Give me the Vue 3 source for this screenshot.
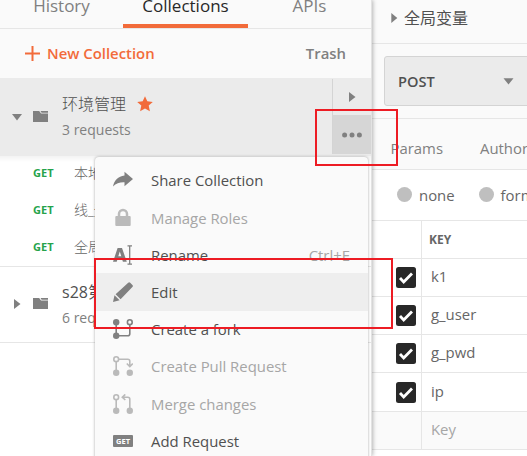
<script setup>
const tabs = ['History', 'Collections', 'APIs']
const requests = ['本地登录', '线_登录', '全局变量']
const params = ['k1', 'g_user', 'g_pwd', 'ip']
const menu = [
  { icon: 'share', label: 'Share Collection' },
  { icon: 'lock', label: 'Manage Roles', disabled: true },
  { icon: 'rename', label: 'Rename', hint: 'Ctrl+E' },
  { icon: 'edit', label: 'Edit', hover: true },
  { icon: 'fork', label: 'Create a fork' },
  { icon: 'pull', label: 'Create Pull Request', disabled: true },
  { icon: 'merge', label: 'Merge changes', disabled: true },
  { icon: 'get', label: 'Add Request' },
]
</script>

<template>
  <div class="app">
    <aside class="sidebar">
      <nav class="tabs">
        <div v-for="(t, i) in tabs" :key="t" class="tab" :class="{ active: i === 1 }">{{ t }}</div>
      </nav>
      <div class="toolbar">
        <svg class="plus" width="15" height="15" viewBox="0 0 15 15"><path d="M7.5 0v15M0 7.5h15" /></svg>
        <span class="new">New Collection</span>
        <span class="trash">Trash</span>
      </div>
      <section class="collection selected">
        <svg class="caret" width="10" height="10" viewBox="0 0 10 10"><path d="M0 2h10L5 8.5z" /></svg>
        <svg class="folder" width="15" height="11" viewBox="0 0 15 11"><path d="M0 0h6.2l1.8 2.6H15V11H0zM7.5 0H15v1.7H8.6z" /></svg>
        <div class="info">
          <div class="name cjk">环境管理
            <svg class="star" width="16" height="16" viewBox="0 0 16 16"><path d="M8 .3l2.3 5 5.5.6-4.1 3.7 1.2 5.6L8 12.4l-4.9 2.8 1.2-5.6L.2 5.9l5.5-.6z" /></svg>
          </div>
          <div class="count">3 requests</div>
        </div>
        <div class="actions">
          <div class="action"><svg width="8" height="10" viewBox="0 0 8 10"><path d="M1 0l6.5 5L1 10z" /></svg></div>
          <div class="action more"><svg width="20" height="6" viewBox="0 0 20 6"><circle cx="2.6" cy="3" r="2.5" /><circle cx="10" cy="3" r="2.5" /><circle cx="17.4" cy="3" r="2.5" /></svg></div>
        </div>
      </section>
      <ul class="requests">
        <li v-for="r in requests" :key="r"><b>GET</b><span>{{ r }}</span></li>
      </ul>
      <section class="collection second">
        <svg class="caret" width="10" height="10" viewBox="0 0 10 10"><path d="M2 0l6.5 5L2 10z" /></svg>
        <svg class="folder" width="15" height="11" viewBox="0 0 15 11"><path d="M0 0h6.2l1.8 2.6H15V11H0zM7.5 0H15v1.7H8.6z" /></svg>
        <div class="info">
          <div class="name">s28第一期</div>
          <div class="count">6 requests</div>
        </div>
      </section>
    </aside>

    <main class="main">
      <header class="title"><svg width="7" height="10" viewBox="0 0 7 10"><path d="M.3 0l6 5-6 5z" /></svg><span>全局变量</span></header>
      <div class="urlbar">
        <div class="method"><span>POST</span><svg width="11" height="7" viewBox="0 0 11 7"><path d="M.5.3h10L5.5 6.5z" /></svg></div>
      </div>
      <div class="subtabs"><span>Params</span><span>Authorization</span></div>
      <div class="radios"><i></i><span>none</span><i></i><span>form-data</span></div>
      <div class="table">
        <div class="row head"><div class="check"></div><div class="cell">KEY</div></div>
        <div v-for="p in params" :key="p" class="row">
          <div class="check"><svg width="20" height="21" viewBox="0 0 20 21"><rect width="20" height="21" rx="2.5" /><path d="M4 11l3.7 4L16 6.5" /></svg></div>
          <div class="cell">{{ p }}</div>
        </div>
        <div class="row empty"><div class="check"></div><div class="cell">Key</div></div>
      </div>
    </main>

    <div class="menu">
      <div v-for="m in menu" :key="m.label" class="item" :class="{ disabled: m.disabled, hover: m.hover }">
        <svg class="icon" width="20" height="20" viewBox="0 0 20 20">
          <path v-if="m.icon === 'share'" d="M0 16.5C1.2 10 5 6.2 11.5 5.4V1.8L20 9l-8.5 7.2v-4C7 12 3.2 13 0 16.5z" />
          <template v-else-if="m.icon === 'lock'">
            <rect x="2.3" y="8" width="15.4" height="10" rx="1" /><path class="line thick" d="M6 9V6a4 4 0 0 1 8 0v3" />
          </template>
          <template v-else-if="m.icon === 'rename'">
            <path d="M4.6 3h4.4l4.8 13.8h-3.9l-.9-2.8H4.6l-.9 2.8H0zM6.8 6.6L5.3 11.3h3z" /><path class="line thin" d="M14.5 .8h4.5M16.7.8v18.4M14.5 19.2h4.5" />
          </template>
          <path v-else-if="m.icon === 'edit'" d="M15.2.7q1-1 2 0l2.2 2.2q1 1 0 2L7.6 17.2l-5-5zM1.5 13.3L6.6 18.2 0 20z" />
          <template v-else-if="m.icon === 'fork'">
            <circle cx="3.2" cy="3.2" r="3.2" /><circle cx="3.2" cy="16.8" r="3.2" /><circle class="line" cx="16.8" cy="3.2" r="2.4" />
            <path class="line" d="M3.2 5v10M5 16.8h9.8q2 0 2-2V5.8" />
          </template>
          <template v-else-if="m.icon === 'pull'">
            <circle class="line" cx="3.2" cy="3.2" r="2.4" /><circle cx="3.2" cy="16.8" r="3.2" /><circle cx="16.8" cy="16.8" r="3.2" />
            <path class="line" d="M3.2 5.8V15M5.8 3.2h9q2 0 2 2v5M13.8 7.5l3 3 3-3" />
          </template>
          <template v-else-if="m.icon === 'merge'">
            <circle class="line" cx="3.2" cy="3.2" r="2.4" /><circle cx="3.2" cy="16.8" r="3.2" /><circle cx="16.8" cy="16.8" r="3.2" />
            <path class="line" d="M3.2 5.8V15M16.8 15V5.2q0-2-2-2H9.5M12.3.4l-3 2.8 3 2.8" />
          </template>
          <template v-else>
            <rect y="4" width="20" height="12" rx="1" /><text x="10" y="12.9" text-anchor="middle">GET</text>
          </template>
        </svg>
        <span class="label">{{ m.label }}</span>
        <span v-if="m.hint" class="hint">{{ m.hint }}</span>
      </div>
    </div>

    <div class="mark mark-more"></div>
    <div class="mark mark-edit"></div>
  </div>
</template>

<style>
body { margin: 0; overflow: hidden; }
</style>
<style scoped>
* { box-sizing: border-box; }
.app { position: relative; display: flex; width: 527px; height: 456px; overflow: hidden; background: #fff; color: #505050; font: 15px/20px "Open Sans", "Noto Sans CJK SC", sans-serif; white-space: nowrap; }
svg { display: block; flex: none; fill: #808080; }
.sidebar { position: relative; z-index: 1; width: 372px; flex: none; background: #fff; border-right: 1px solid #e2e2e2; box-shadow: 1px 0 4px rgba(0, 0, 0, .28); }
.tabs { display: flex; height: 29px; background: #fafafa; border-bottom: 1px solid #e6e6e6; font-size: 17px; line-height: 12px; color: #808080; }
.tab { width: 123px; text-align: center; }
.tab.active { width: 125px; color: #282828; border-bottom: 4px solid #f26b3a; }
.toolbar { display: flex; align-items: center; height: 49px; padding: 0 25px 1px; background: #fafafa; font-weight: 600; font-size: 14.9px; }
.plus { stroke: #f26b3a; stroke-width: 2; margin-right: 7px; }
.new { color: #f26b3a; }
.trash { margin-left: auto; color: #808080; }
.collection { display: flex; align-items: center; height: 76px; padding-left: 12px; border-bottom: 1px solid #e6e6e6; }
.collection.selected { height: 78px; background: #ebebeb; border: 0; }
.folder { margin: -2px 14px 0 11px; }
.caret { margin-top: -1px; }
.info { flex: 1; }
.name { display: flex; align-items: center; height: 26px; font-size: 16px; }
.cjk, .requests span { font-weight: 300; }
.star { fill: #f26b3a; margin-left: 11px; margin-top: -1px; }
.count { height: 26px; line-height: 26px; font-size: 14px; color: #808080; }
.actions { width: 39px; height: 75px; margin-top: 1px; align-self: flex-start; border-left: 1px solid #d4d4d4; }
.action { display: grid; place-items: center; height: 36px; }
.action.more { height: 39px; background: #d6d6d6; }
.requests { margin: 0; padding: 0; height: 111px; list-style: none; border-bottom: 1px solid #e6e6e6; background: linear-gradient(#f3f3f3, #fff 6px); }
.requests li { display: flex; align-items: center; height: 37px; padding: 0 0 3px 33px; font-size: 14px; color: #666; }
.requests b { width: 41px; font-size: 11px; color: #26a34b; }
.main { flex: 1; min-width: 0; overflow: hidden; }
.title { display: flex; align-items: center; height: 44px; padding: 0 0 7px 19px; background: #fafafa; border-bottom: 1px solid #e6e6e6; font-size: 16px; }
.title span { margin-left: 6px; }
.urlbar { height: 75px; padding: 12px 0 0 12px; background: #fafafa; border-bottom: 1px solid #e6e6e6; }
.method { display: flex; align-items: center; justify-content: space-between; width: 158px; height: 50px; padding: 0 27px 0 13px; border: 1px solid #d4d4d4; border-radius: 3px; background: #ebebeb; font-weight: 600; font-size: 14.6px; }
.subtabs { display: flex; align-items: center; gap: 37px; height: 51px; padding: 8px 0 0 18.5px; background: #fafafa; border-bottom: 1px solid #e6e6e6; color: #808080; font-size: 14.9px; }
.radios { display: flex; align-items: center; height: 50px; padding-left: 25px; color: #666; font-size: 14.9px; }
.radios i { flex: none; width: 15px; height: 15px; margin-top: -1px; border-radius: 50%; background: #bfbfbf; }
.radios span { margin: 0 24px 0 7px; }
.table { border-top: 1px solid #e6e6e6; }
.row { display: flex; height: 38px; border-bottom: 1px solid #e6e6e6; }
.row:nth-child(5) { height: 39px; }
.check { display: grid; place-items: center; width: 50px; padding-left: 18px; border-right: 1px solid #e6e6e6; }
.check path { fill: none; stroke: #fff; stroke-width: 2.8; }
.check rect { fill: #282828; }
.cell { display: flex; align-items: center; padding: 0 0 3px 9px; color: #666; font-size: 14.9px; }
.head .cell { padding: 0 0 0 7px; font-size: 12px; font-weight: 700; }
.row.empty { background: #fafafa; }
.empty .cell { color: #a6a6a6; }
.menu { position: absolute; z-index: 2; left: 95px; top: 157px; width: 273px; height: 320px; padding-top: 4.8px; border-radius: 4px; background: #fafafa; box-shadow: 0 0 3px rgba(0, 0, 0, .35); }
.item { display: flex; align-items: center; height: 37.2px; padding: 0 18px; font-size: 14.9px; }
.item.hover { background: #eee; }
.label { margin-left: 18px; }
.hint { margin-left: auto; color: #a6a6a6; }
.disabled { color: #a6a6a6; }
.disabled .icon { fill: #bababa; stroke: none; }
.icon .line { fill: none; stroke: #808080; stroke-width: 1.6; }
.disabled .icon .line { stroke: #bababa; }
.icon .line.thick { stroke-width: 2.5; }
.icon .line.thin { stroke-width: 1.3; }
.icon text { fill: #fff; font-size: 7.5px; font-weight: 700; }
.mark { position: absolute; z-index: 3; border: 2px solid #ed1c24; }
.mark-more { left: 315px; top: 109px; width: 83px; height: 57px; }
.mark-edit { left: 94px; top: 258px; width: 299px; height: 71px; }
</style>
